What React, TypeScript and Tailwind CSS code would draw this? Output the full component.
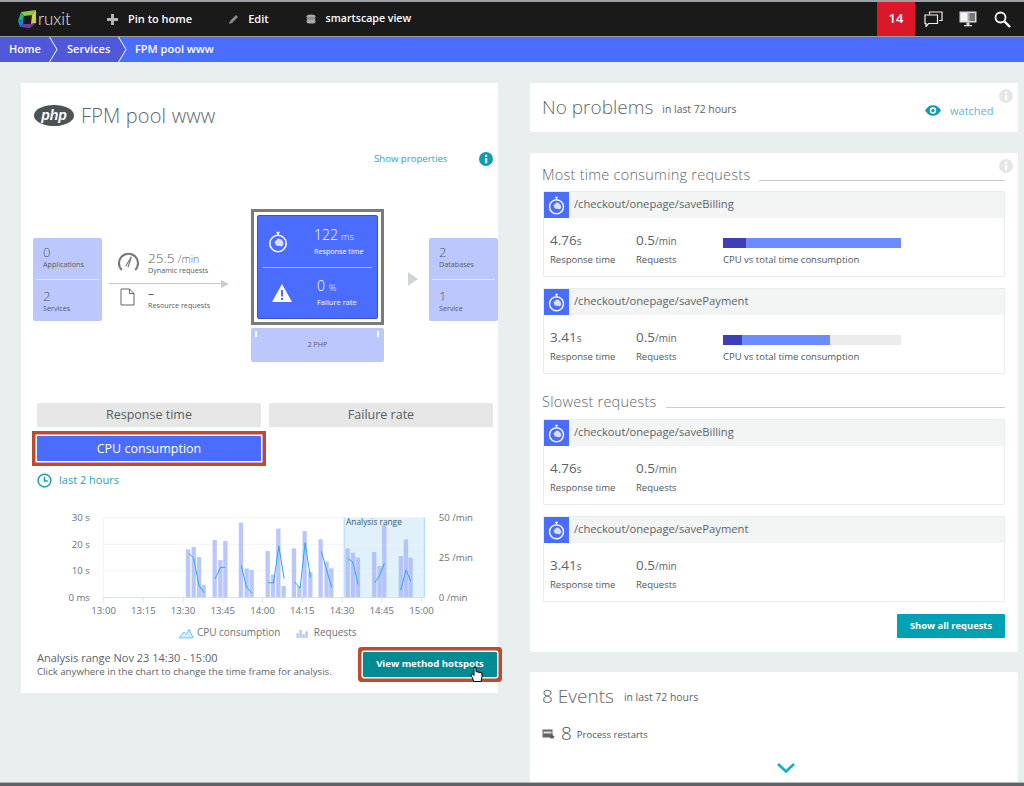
import type { ReactNode } from 'react';

const requestBars: [number, number][] = [
  [408, 130], [425, 123], [441, 153], [455, 237],
  [488, 102], [505, 162], [520, 105],
  [567, 50], [584, 187], [599, 192],
  [647, 135], [663, 205], [679, 68], [695, 240],
  [726, 127], [742, 240], [758, 75], [775, 198],
  [806, 100], [824, 167], [838, 187],
  [887, 127], [903, 140], [918, 155],
  [967, 138], [983, 180], [997, 57],
  [1047, 150], [1062, 100], [1076, 155],
];

const cpuLines = [
  '417,143 431,155 447,238 463,260',
  '496,218 512,184 526,184',
  '574,178 590,243 606,262',
  '655,230 671,231 687,120 703,218',
  '735,228 751,246 766,110 782,215',
  '814,135 830,190 846,245',
  '895,158 909,168 925,235',
  '975,230 990,208 1004,172',
  '1053,252 1069,192 1083,225',
];

const timeTicks = ['13:00', '13:15', '13:30', '13:45', '14:00', '14:15', '14:30', '14:45', '15:00'];

function StopwatchIcon({ className }: { className?: string }) {
  return (
    <svg viewBox="0 0 20 22" className={className} fill="none" stroke="white" strokeWidth="1.6">
      <circle cx="10" cy="12.5" r="8.2" />
      <path d="M8.5 1.5h3M10 1.5v3" />
      <path d="M6.5 11 L10 7.5 A5.5 5.5 0 0 1 15.5 13 A5 5 0 0 1 14 15.5 L8 14.5 Z" fill="#d9e0ff" stroke="none" />
    </svg>
  );
}

function InfoIcon({ className, fill }: { className: string; fill: string }) {
  return (
    <svg viewBox="0 0 14 14" className={className}>
      <circle cx="7" cy="7" r="7" fill={fill} />
      <rect x="6" y="6" width="2.2" height="5.2" fill="white" />
      <rect x="6" y="2.8" width="2.2" height="2" fill="white" />
    </svg>
  );
}

function Crumb({ label, className }: { label: string; className: string }) {
  return (
    <div className={`flex items-center h-full bg-[#4f58d8] ${className}`}>
      <span className="flex-1">{label}</span>
      <svg viewBox="0 0 9 25" className="h-[25px] w-[9px] -mr-[9px] relative z-10">
        <path d="M0 0 L8 12.5 L0 25 Z" fill="#4f58d8" />
        <path d="M0.5 0 L8 12.5 L0.5 25" fill="none" stroke="white" strokeWidth="1" />
      </svg>
    </div>
  );
}

function TopBar() {
  return (
    <>
      <div className="h-[2px] bg-[#9aa0a4]" />
      <div className="h-[34px] bg-[#1a1a1a] flex items-center text-white text-[11px] font-semibold">
        <svg viewBox="0 0 20 20" className="w-[20px] h-[20px] ml-[17px]">
          <polygon points="4,3 19,1 15,6 7,7" fill="#8dc63f" />
          <polygon points="19,1 19,14 14,15 15,6" fill="#cfcf45" />
          <polygon points="4,3 7,7 6,11 1,12" fill="#14b48c" />
          <polygon points="1,12 6,11 6,15 3,18" fill="#1a80d8" />
          <polygon points="6,15 14,15 19,14 13,19 3,18" fill="#6f3aa8" />
        </svg>
        <span className="text-[17px] font-light ml-[1px] w-[36px] text-[#e8e8e8] font-['Lato',sans-serif]">ruxit</span>
        <svg viewBox="0 0 11 11" className="w-[11px] h-[11px] ml-[33px]">
          <path d="M4 0h3v4h4v3H7v4H4V7H0V4h4z" fill="#b5b5b5" />
        </svg>
        <span className="ml-[10px]">Pin to home</span>
        <svg viewBox="0 0 10 10" className="w-[10px] h-[10px] ml-[37px]">
          <path d="M0 10 L1 7 L7 1 L9 3 L3 9 Z" fill="#8a8a8a" />
        </svg>
        <span className="ml-[9px]">Edit</span>
        <svg viewBox="0 0 10 10" className="w-[10px] h-[10px] ml-[37px]">
          <ellipse cx="5" cy="2.6" rx="4.5" ry="2.2" fill="#aaa" />
          <ellipse cx="5" cy="5" rx="4.5" ry="2.2" fill="#888" />
          <ellipse cx="5" cy="7.4" rx="4.5" ry="2.2" fill="#aaa" />
        </svg>
        <span className="ml-[10px] text-[10.6px]">smartscape view</span>
        <div className="ml-auto h-full w-[38px] bg-[#dc172a] flex items-center justify-center text-[13px] font-semibold">14</div>
        <svg viewBox="0 0 19 16" className="w-[19px] h-[16px] ml-[9px]" fill="none" stroke="#eee" strokeWidth="1.2">
          <path d="M5.5 3.5V1H18v8.5h-3" />
          <path d="M1 4h12.5v8.5H4.5L2 15.5v-3H1z" />
        </svg>
        <svg viewBox="0 0 18 16" className="w-[18px] h-[16px] ml-[16px]">
          <rect x="0.5" y="0.5" width="17" height="11" fill="#d8d8d8" />
          <rect x="2" y="2" width="6.5" height="8" fill="#f4f4f4" />
          <rect x="8.5" y="2" width="1" height="8" fill="#7fd0e8" />
          <rect x="9.5" y="2" width="1" height="8" fill="#d070a0" />
          <rect x="10.5" y="2" width="5.5" height="8" fill="#777" />
          <rect x="7.5" y="11.5" width="3" height="2.5" fill="#ddd" />
          <rect x="5" y="14" width="8" height="1.3" fill="#ddd" />
        </svg>
        <svg viewBox="0 0 17 17" className="w-[17px] h-[17px] ml-[17px] mr-[13px]" fill="none" stroke="white">
          <circle cx="6.5" cy="6.5" r="5" strokeWidth="1.8" />
          <path d="M10.5 10.5 L16 16" strokeWidth="2.4" />
        </svg>
      </div>
      <div className="h-[1px] bg-[#9a9a9a]" />
      <div className="h-[25px] bg-[#4a6dff] flex items-center text-white text-[11px] font-semibold">
        <Crumb label="Home" className="w-[49px] pl-[9px]" />
        <Crumb label="Services" className="w-[69px] pl-[18px]" />
        <div className="pl-[17px]">FPM pool www</div>
      </div>
    </>
  );
}

function StatBox({ rows }: { rows: [string, string][] }) {
  return (
    <div className="w-[69px] h-[83px] mt-[29px] bg-[#bcc8fd] rounded-[2px] px-[3px] text-[#555c60] shrink-0">
      {rows.map(([n, label], i) => (
        <div key={label} className={i === 1 ? 'h-[42px] px-[7px] pt-[10px] border-t border-[#dfe5ff]' : 'h-[41px] px-[7px] pt-[8px]'}>
          <div className="text-[13px] leading-[13px] font-light">{n}</div>
          <div className="text-[7.2px] leading-[9px] mt-[1px] whitespace-nowrap">{label}</div>
        </div>
      ))}
    </div>
  );
}

function Diagram() {
  return (
    <div className="flex items-start ml-[12px] h-[153px] mt-[43px]">
      <StatBox rows={[['0', 'Applications'], ['2', 'Services']]} />
      <div className="w-[120px] ml-[7px] mt-[41px] shrink-0 text-[#555c60]">
        <div className="flex h-[29px]">
          <svg viewBox="0 0 24 22" className="w-[23px] h-[21px] ml-[8px] mt-[1px]" fill="none" stroke="#777" strokeWidth="2.2">
            <path d="M5 20 A10 10 0 1 1 19 20" />
            <path d="M9 16 L15 6 M11.5 17 L15 6" strokeWidth="1.2" />
          </svg>
          <div className="ml-[8px] pt-[1px]">
            <div className="text-[13.5px] leading-[14px] font-light whitespace-nowrap">25.5 <span className="text-[10.5px]">/min</span></div>
            <div className="text-[7.2px] leading-[8px] whitespace-nowrap">Dynamic requests</div>
          </div>
        </div>
        <div className="flex items-center h-[9px]">
          <div className="h-[1px] w-[112px] bg-[#c4c8ca]" />
          <div className="w-0 h-0 border-y-[4.5px] border-y-transparent border-l-[8px] border-l-[#c9cdcf]" />
        </div>
        <div className="flex">
          <svg viewBox="0 0 15 18" className="w-[15px] h-[18px] ml-[11px]" fill="none" stroke="#666" strokeWidth="1">
            <path d="M1 1h8.5L14 5.5V17H1z" />
            <path d="M9.5 1v4.5H14" />
          </svg>
          <div className="ml-[13px]">
            <div className="text-[12px] leading-[12px]">–</div>
            <div className="text-[7.2px] leading-[9px] mt-[1px] whitespace-nowrap">Resource requests</div>
          </div>
        </div>
      </div>
      <div className="w-[133px] ml-[22px] shrink-0">
        <div className="h-[116px] border-[3px] border-[#7b7b7b] p-[3px] bg-white">
          <div className="h-full bg-[#4a6dff] border border-[#3d4fc0] rounded-[2px] text-white flex flex-col">
            <div className="h-[52px] flex items-center border-b border-[#a9baff] mx-[5px]">
              <StopwatchIcon className="w-[20px] h-[22px] ml-[5px]" />
              <div className="ml-[26px] pt-[1px]">
                <div className="text-[14px] leading-[16px] font-light whitespace-nowrap">122<span className="text-[9.5px] ml-[3px]">ms</span></div>
                <div className="text-[7.2px] leading-[12px] whitespace-nowrap">Response time</div>
              </div>
            </div>
            <div className="flex-1 flex items-center mx-[5px]">
              <svg viewBox="0 0 20 18" className="w-[20px] h-[18px] ml-[9px]">
                <path d="M10 0 L20 18 H0 Z" fill="white" />
                <rect x="9" y="6" width="2" height="6.5" fill="#4a6dff" />
                <rect x="9" y="14" width="2" height="2" fill="#4a6dff" />
              </svg>
              <div className="ml-[25px]">
                <div className="text-[14px] leading-[16px] font-light">0 <span className="text-[9.5px]">%</span></div>
                <div className="text-[7.5px] leading-[12px] whitespace-nowrap">Failure rate</div>
              </div>
            </div>
          </div>
        </div>
        <div className="relative h-[34px] mt-[3px] bg-[#bcc8fd] rounded-[2px] flex items-center justify-center text-[7px] text-[#555c60]">
          2 PHP
          <span className="absolute left-[4px] top-[3px] w-[2px] h-[6px] bg-white" />
          <span className="absolute right-[5px] top-[3px] w-[2px] h-[6px] bg-white" />
        </div>
      </div>
      <div className="w-0 h-0 ml-[24px] mt-[63px] border-y-[7px] border-y-transparent border-l-[10px] border-l-[#d2d5d7] shrink-0" />
      <div className="ml-[11px]">
        <StatBox rows={[['2', 'Databases'], ['1', 'Service']]} />
      </div>
    </div>
  );
}

function Chart() {
  const toX = (i: number) => 161 + i * 119.3;
  return (
    <svg viewBox="0 0 1300 420" className="w-[433px] h-[140px] ml-[29px] mt-[18px] block">
      <rect x="883" y="35" width="242" height="240" fill="#e0f1fb" />
      {[35, 115, 195].map((y) => (
        <line key={y} x1="160" x2="1125" y1={y} y2={y} stroke="#eef1f2" strokeWidth="2.5" />
      ))}
      <line x1="160" x2="160" y1="35" y2="275" stroke="#e8ecee" strokeWidth="2" />
      {requestBars.map(([x, top]) => (
        <rect key={x} x={x} y={top} width="13" height={275 - top} fill="#a9b9fb" opacity="0.8" />
      ))}
      {cpuLines.map((points) => (
        <polyline key={points} points={points} fill="none" stroke="#2aa5ee" strokeWidth="3" />
      ))}
      <line x1="160" x2="1125" y1="275" y2="275" stroke="#cfdbe6" strokeWidth="2.5" />
      {timeTicks.map((_, i) => (
        <line key={i} x1={toX(i)} x2={toX(i)} y1="275" y2="290" stroke="#cfdbe6" strokeWidth="2" />
      ))}
      <line x1="883" x2="883" y1="35" y2="275" stroke="#29aee6" strokeWidth="2" strokeDasharray="3 3" />
      <line x1="1124" x2="1124" y1="35" y2="275" stroke="#29aee6" strokeWidth="2" strokeDasharray="3 3" />
      <g fontSize="29" fill="#6b7276" fontFamily="'Open Sans', sans-serif">
        <text x="120" y="45" textAnchor="end">30 s</text>
        <text x="120" y="125" textAnchor="end">20 s</text>
        <text x="120" y="205" textAnchor="end">10 s</text>
        <text x="120" y="285" textAnchor="end">0 ms</text>
        <text x="1167" y="45">50 /min</text>
        <text x="1167" y="165">25 /min</text>
        <text x="1167" y="285">0 /min</text>
        {timeTicks.map((t, i) => (
          <text key={t} x={toX(i)} y="323" textAnchor="middle">{t}</text>
        ))}
        <text x="441" y="391" fontSize="30">CPU consumption</text>
        <text x="792" y="391" fontSize="30">Requests</text>
      </g>
      <text x="889" y="57" fontSize="25" fill="#33586e" fontFamily="'Open Sans', sans-serif">Analysis range</text>
      <path d="M388 396 L402 378 L410 384 L418 370 L430 396 Z" fill="#d3ecfa" stroke="#46aee8" strokeWidth="2" />
      <g fill="#b6c4fb">
        <rect x="740" y="382" width="7" height="14" />
        <rect x="749" y="372" width="7" height="24" />
        <rect x="758" y="384" width="7" height="12" />
        <rect x="767" y="376" width="7" height="20" />
      </g>
    </svg>
  );
}

function LeftCard() {
  return (
    <div className="w-[477px] h-[610px] ml-[21px] bg-white rounded-[2px] shrink-0">
      <div className="flex items-center pt-[22px] pl-[13px] h-[43px]">
        <svg viewBox="0 0 40 21" className="w-[40px] h-[21px]">
          <ellipse cx="20" cy="10.5" rx="20" ry="10.5" fill="#4c5357" />
          <text x="20" y="15" textAnchor="middle" fontSize="14" fontWeight="700" fontStyle="italic" fill="white" fontFamily="'Liberation Sans', sans-serif">php</text>
        </svg>
        <h1 className="ml-[7px] text-[20px] leading-[21px] font-light text-[#5f676b] tracking-[0.15px]">FPM pool www</h1>
      </div>
      <div className="flex items-center h-[14px] mt-[26px] pl-[353px]">
        <span className="w-[105px] text-[9.6px] text-[#27a9bc]">Show properties</span>
        <InfoIcon className="w-[14px] h-[14px]" fill="#0e9db0" />
      </div>
      <Diagram />
      <div className="grid grid-cols-2 gap-x-[8px] w-[456px] ml-[16px] mt-[41px] text-[12.5px] text-center">
        <div className="h-[24px] leading-[24px] bg-[#e6e6e6] text-[#585e62]">Response time</div>
        <div className="h-[24px] leading-[24px] bg-[#e6e6e6] text-[#585e62]">Failure rate</div>
        <div className="h-[25px] leading-[25px] mt-[9px] bg-[#4a6dff] text-white shadow-[0_0_0_1.5px_#fff,0_0_0_5px_#bf4a30]">CPU consumption</div>
      </div>
      <div className="flex items-center h-[16px] ml-[16px] mt-[11px] text-[11px] text-[#27a3b6]">
        <svg viewBox="0 0 16 16" className="w-[15px] h-[15px]" fill="none" stroke="#16a0b4" strokeWidth="1.6">
          <circle cx="8" cy="8" r="6.8" />
          <path d="M8 4v4.4h3.5" />
        </svg>
        <span className="ml-[7px]">last 2 hours</span>
      </div>
      <Chart />
      <div className="flex pl-[16px] mt-[5px] text-[#5c6367]">
        <div className="w-[326px]">
          <div className="text-[11px] leading-[14px]">Analysis range Nov 23 14:30 - 15:00</div>
          <div className="text-[9.7px] leading-[14px] whitespace-nowrap">Click anywhere in the chart to change the time frame for analysis.</div>
        </div>
        <div className="relative w-[134px] h-[25px] mt-[1px] bg-[#008a92] text-white text-[9.6px] font-bold flex items-center justify-center rounded-[1px] shadow-[0_0_0_1.5px_#fff,0_0_0_5px_#bf4a30]">
          View method hotspots
          <svg viewBox="0 0 13 17" className="absolute left-[107px] top-[14px] w-[13px] h-[17px]">
            <path d="M4 1.5v8L2.5 8 1 9l3 6.5h7l1-5V7L10 6.5 8 6 6 5.7V1.5z" fill="white" stroke="black" strokeWidth="1" />
          </svg>
        </div>
      </div>
    </div>
  );
}

function RequestCard({ path, time, unit, cpu, total }: { path: string; time: string; unit: string; cpu?: number; total?: number }) {
  return (
    <div className="w-[462px] h-[86px] border-[1.5px] border-[#e8eded] rounded-[1px]">
      <div className="flex items-center h-[26px] bg-[#f3f5f5]">
        <div className="w-[25px] h-[26px] bg-[#4a6dff] flex items-center justify-center">
          <StopwatchIcon className="w-[17px] h-[19px]" />
        </div>
        <span className="ml-[5px] -mt-[2px] text-[11.2px] text-[#5c6367]">{path}</span>
      </div>
      <div className="flex pl-[6px] pt-[13px] text-[#4f565a]">
        <div className="w-[86px]">
          <div className="text-[13.5px] leading-[18px] text-[#5c6367]">{time}<span className="text-[10px]">{unit}</span></div>
          <div className="text-[9.5px] leading-[14px] mt-[3px]">Response time</div>
        </div>
        <div className="w-[87px]">
          <div className="text-[13.5px] leading-[18px] text-[#5c6367]">0.5<span className="text-[10px]">/min</span></div>
          <div className="text-[9.5px] leading-[14px] mt-[3px]">Requests</div>
        </div>
        {cpu !== undefined && total !== undefined && (
          <div className="w-[178px]">
            <div className="flex h-[10px] w-[178px] mt-[7px] bg-[#ebebeb]">
              <div className="bg-[#3c3fb5]" style={{ width: cpu }} />
              <div className="bg-[#6c8bff]" style={{ width: total - cpu }} />
            </div>
            <div className="text-[9.5px] leading-[14px] mt-[5px] whitespace-nowrap">CPU vs total time consumption</div>
          </div>
        )}
      </div>
    </div>
  );
}

function SectionHeading({ children, className }: { children: ReactNode; className: string }) {
  return (
    <div className={`flex items-end h-[18px] ${className}`}>
      <span className="text-[14.5px] leading-[18px] font-light text-[#5f676b] whitespace-nowrap tracking-[0.25px]">{children}</span>
      <div className="flex-1 h-[1px] bg-[#c8cccd] ml-[9px] mb-[3px]" />
    </div>
  );
}

function RightColumn() {
  return (
    <div className="w-[488px] ml-[32px] shrink-0">
      <div className="relative h-[49px] bg-white rounded-[2px] flex items-center pl-[12px]">
        <span className="text-[19px] font-light text-[#5f676b]">No problems</span>
        <span className="ml-[9px] mt-[4px] text-[10.4px] text-[#5c6367]">in last 72 hours</span>
        <svg viewBox="0 0 16 11" className="absolute left-[395px] top-[22px] w-[16px] h-[11px]">
          <path d="M0 5.5 C4 -1.5 12 -1.5 16 5.5 C12 12.5 4 12.5 0 5.5 Z" fill="#0e9db0" />
          <circle cx="8" cy="5.5" r="3.2" fill="white" />
          <circle cx="8" cy="5.5" r="1.7" fill="#0e9db0" />
        </svg>
        <span className="absolute left-[420px] top-[20px] text-[11px] text-[#5db8c8]">watched</span>
        <InfoIcon className="absolute left-[469px] top-[6px] w-[14px] h-[14px]" fill="#e6e6e6" />
      </div>
      <div className="relative h-[499px] mt-[21px] bg-white rounded-[2px] px-[13px] pt-[13px]">
        <InfoIcon className="absolute left-[469px] top-[6px] w-[14px] h-[14px]" fill="#e6e6e6" />
        <SectionHeading className="mb-[7px] -ml-[1px]">Most time consuming requests</SectionHeading>
        <RequestCard path="/checkout/onepage/saveBilling" time="4.76" unit="s" cpu={23} total={178} />
        <div className="mt-[11px]">
          <RequestCard path="/checkout/onepage/savePayment" time="3.41" unit="s" cpu={19} total={107} />
        </div>
        <SectionHeading className="mt-[19px] mb-[8px] -ml-[1px]">Slowest requests</SectionHeading>
        <RequestCard path="/checkout/onepage/saveBilling" time="4.76" unit="s" />
        <div className="mt-[11px]">
          <RequestCard path="/checkout/onepage/savePayment" time="3.41" unit="s" />
        </div>
        <div className="flex justify-end mt-[12px]">
          <div className="w-[108px] h-[24px] bg-[#00a1b2] text-white text-[9.4px] font-bold flex items-center justify-center rounded-[1px]">Show all requests</div>
        </div>
      </div>
      <div className="h-[120px] mt-[20px] bg-white rounded-[2px] pl-[12px] pt-[11px]">
        <div className="flex items-center h-[26px]">
          <span className="text-[19px] font-light text-[#5f676b]">8 Events</span>
          <span className="ml-[10px] mt-[4px] text-[10.4px] text-[#5c6367]">in last 72 hours</span>
        </div>
        <div className="flex items-center h-[24px] mt-[12px]">
          <svg viewBox="0 0 13 11" className="w-[13px] h-[11px]">
            <rect x="0.5" y="1.5" width="10" height="8" fill="#666" />
            <rect x="1.5" y="3.5" width="8" height="2" fill="#ddd" />
            <path d="M10 6l1 1.7 1.7.3-1.2 1.2.3 1.8-1.8-.9-1.7.9.3-1.8L7.5 8l1.8-.3z" fill="#555" />
          </svg>
          <span className="ml-[6px] text-[19px] font-light text-[#4f565a]">8</span>
          <span className="ml-[5px] mt-[5px] text-[9.5px] text-[#4f565a]">Process restarts</span>
        </div>
        <div className="flex justify-center w-[488px] -ml-[12px] mt-[18px] pl-[24px]">
          <svg viewBox="0 0 18 10" className="w-[18px] h-[10px]" fill="none" stroke="#0fb0c4" strokeWidth="2.6">
            <path d="M1 1 L9 8.5 L17 1" />
          </svg>
        </div>
      </div>
    </div>
  );
}

export default function App() {
  return (
    <div className="h-[786px] w-[1024px] overflow-hidden flex flex-col bg-[#e9eeef] font-['Open_Sans',sans-serif]">
      <TopBar />
      <div className="flex-1 min-h-0 overflow-hidden flex pt-[21px]">
        <LeftCard />
        <RightColumn />
      </div>
      <div className="h-[1px] bg-[#b5b9bb]" />
      <div className="h-[3px] bg-[#5f6365]" />
    </div>
  );
}
